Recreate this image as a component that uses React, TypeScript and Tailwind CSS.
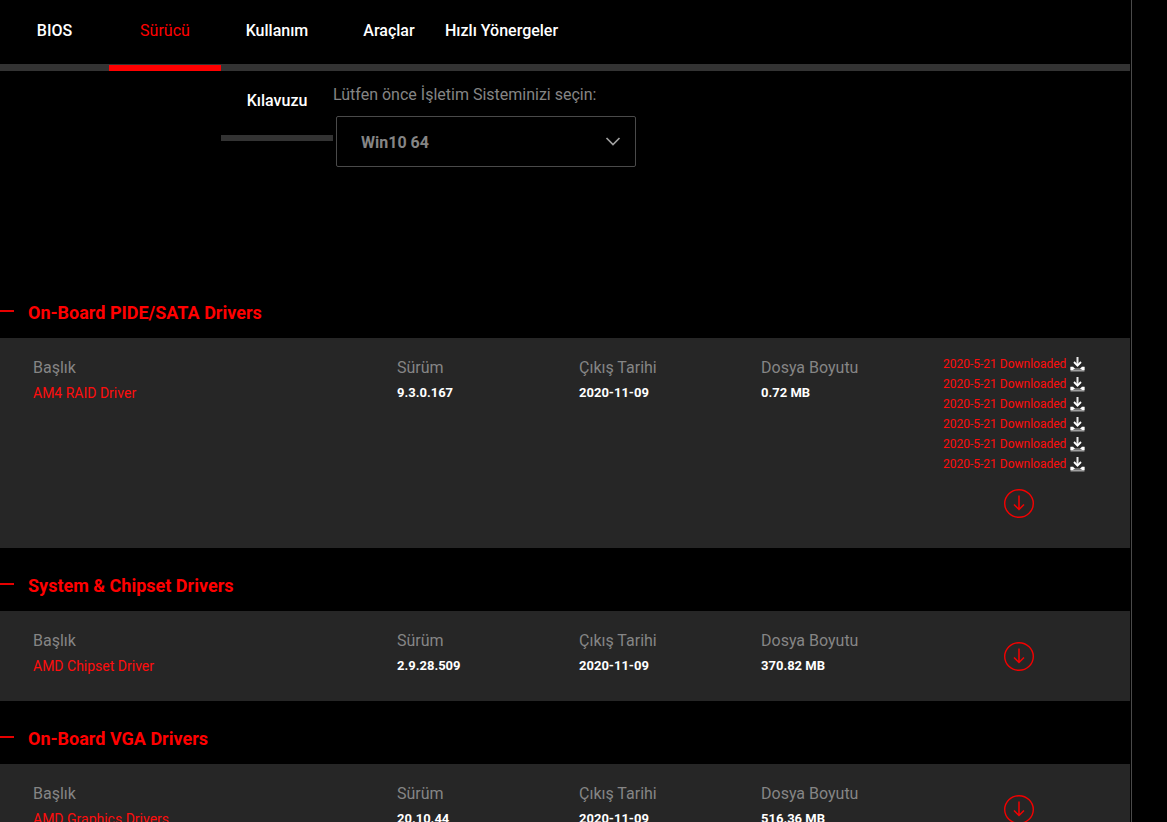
import { useState } from 'react';

type Driver = {
  category: string;
  title: string;
  version: string;
  date: string;
  size: string;
  downloads: string[];
};

const tabs = [
  { id: 'bios', lines: ['BIOS'] },
  { id: 'driver', lines: ['Sürücü'] },
  { id: 'manual', lines: ['Kullanım', 'Kılavuzu'] },
  { id: 'tools', lines: ['Araçlar'] },
  { id: 'guides', lines: ['Hızlı Yönergeler'] },
];

const drivers: Driver[] = [
  {
    category: 'On-Board PIDE/SATA Drivers',
    title: 'AM4 RAID Driver',
    version: '9.3.0.167',
    date: '2020-11-09',
    size: '0.72 MB',
    downloads: Array(6).fill('2020-5-21 Downloaded'),
  },
  {
    category: 'System & Chipset Drivers',
    title: 'AMD Chipset Driver',
    version: '2.9.28.509',
    date: '2020-11-09',
    size: '370.82 MB',
    downloads: [],
  },
  {
    category: 'On-Board VGA Drivers',
    title: 'AMD Graphics Drivers',
    version: '20.10.44',
    date: '2020-11-09',
    size: '516.36 MB',
    downloads: [],
  },
];

function TrayIcon() {
  return (
    <svg width="15" height="15" viewBox="0 0 15 15" fill="none" aria-hidden="true">
      <path d="M7.5 0v8" stroke="#e8e8e8" strokeWidth="2" />
      <path d="M4 5l3.500 3.600L11 5" stroke="#fff" strokeWidth="1.8" />
      <path d="M0.500 9.500h2.500l2 2h5l2-2h2.500v5h-14z" fill="#a0a0a0" />
      <path d="M0.500 10h2.500l2 2-1.500 1H0.500zM14.500 10H12l-2 2 1.500 1h3z" fill="#fff" />
      <path d="M3.500 12.500h8" stroke="#707070" />
    </svg>
  );
}

function DownloadIcon() {
  return (
    <svg width="30" height="30" viewBox="0 0 30 30" fill="none" stroke="#f50000" aria-hidden="true">
      <ellipse cx="15" cy="14.5" rx="14.3" ry="13.8" strokeWidth="1.4" />
      <path d="M15 6.500v14M10 15.500l5 5 5-5" strokeWidth="1.5" />
    </svg>
  );
}

function DriverSection({ driver }: { driver: Driver }) {
  const [open, setOpen] = useState(true);

  return (
    <section>
      <h2 className="pt-[26px] pb-[13px]">
        <button
          type="button"
          aria-expanded={open}
          onClick={() => setOpen(!open)}
          className="flex items-center gap-[14px] text-lg leading-6 font-bold text-[#ff0000]"
        >
          <span className="mb-1 h-[2px] w-[14px] bg-[#e60000]" />
          {driver.category}
        </button>
      </h2>

      {open && (
        <div className="bg-[#262626] pt-4 pr-[5px] pl-[33px]">
          <table className="w-full table-fixed text-left text-sm">
            <colgroup>
              <col className="w-1/3" />
              <col className="w-1/6" />
              <col className="w-1/6" />
              <col className="w-1/6" />
              <col className="w-1/6" />
            </colgroup>
            <tbody>
              <tr className="h-[26px] text-base leading-6 text-[#858585]">
                <th scope="col" className="p-0 pt-[2px] font-normal">Başlık</th>
                <th scope="col" className="p-0 pt-[2px] font-normal">Sürüm</th>
                <th scope="col" className="p-0 pt-[2px] font-normal">Çıkış Tarihi</th>
                <th scope="col" className="p-0 pt-[2px] font-normal">Dosya Boyutu</th>
                <td rowSpan={2} className="p-0 pr-[30px] pb-[29px] align-top">
                  {driver.downloads.length > 0 && (
                    <ul>
                      {driver.downloads.map((label, i) => (
                        <li key={i} className="h-5">
                          <a href="#" className="flex h-5 items-center gap-1 text-xs leading-5 whitespace-nowrap text-[#ff0d0d]">
                            {label}
                            <TrayIcon />
                          </a>
                        </li>
                      ))}
                    </ul>
                  )}
                  <a href="#" aria-label={driver.title} className="mx-auto mt-[15px] block w-[30px]">
                    <DownloadIcon />
                  </a>
                </td>
              </tr>
              <tr className="align-top text-[13px] leading-[26px] font-bold text-white">
                <td className="p-0">
                  <a href="#" className="text-sm leading-[26px] font-normal text-[#ff0d0d]">{driver.title}</a>
                </td>
                <td className="p-0">{driver.version}</td>
                <td className="p-0">{driver.date}</td>
                <td className="p-0">{driver.size}</td>
              </tr>
            </tbody>
          </table>
        </div>
      )}
    </section>
  );
}

export default function App() {
  const [active, setActive] = useState('driver');

  return (
    <div className="flex min-h-screen bg-black font-['Roboto',sans-serif]">
      <main className="min-w-0 flex-1 border-r border-[#4a4a4a] pr-px">
        <nav>
          <ul className="flex h-[71px] items-start border-b-[7px] border-[#333333]">
            {tabs.map((tab) => (
              <li key={tab.id} className="w-[112px] shrink-0 first:w-[109px]">
                <button
                  type="button"
                  onClick={() => setActive(tab.id)}
                  className={
                    active === tab.id
                      ? 'block w-full border-b-[6px] border-[#ff0000] text-base whitespace-nowrap text-[#ff0000]'
                      : 'block w-full border-b-[6px] border-[#333333] text-base font-medium whitespace-nowrap text-white'
                  }
                >
                  {tab.lines.map((line, i) => (
                    <span key={line} className={i === 0 ? 'block pb-[3px] leading-[62px]' : 'block pt-[2px] leading-[68px]'}>
                      {line}
                    </span>
                  ))}
                </button>
              </li>
            ))}
          </ul>
        </nav>

        <div className="min-h-[204px] pt-3 pl-[333px]">
          <label htmlFor="os" className="block text-base leading-6 text-[#858585]">
            Lütfen önce İşletim Sisteminizi seçin:
          </label>
          <div className="mt-[9px] ml-[3px] grid w-[300px] items-center">
            <select
              id="os"
              className="col-start-1 row-start-1 h-[51px] appearance-none rounded-xs border border-[#4a4a4a] bg-black pt-[2px] pl-6 text-base font-bold text-[#858585]"
            >
              <option>Win10 64</option>
            </select>
            <svg
              width="16"
              height="10"
              viewBox="0 0 16 10"
              fill="none"
              className="pointer-events-none col-start-1 row-start-1 mr-[15px] justify-self-end"
              aria-hidden="true"
            >
              <path d="M1.5 1L8 7.500l6.500-6.500" stroke="#a0a0a0" strokeWidth="1.7" />
            </svg>
          </div>
        </div>

        {drivers.map((driver) => (
          <DriverSection key={driver.category} driver={driver} />
        ))}
      </main>
      <div className="w-[35px] shrink-0" />
    </div>
  );
}
